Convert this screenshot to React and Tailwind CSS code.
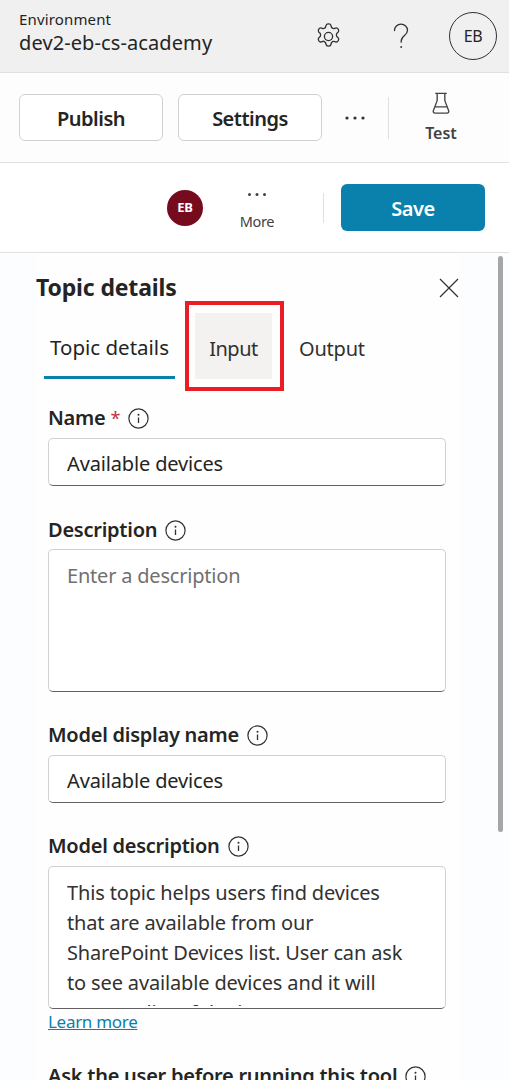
import React from "react";

function Info() {
  return (
    <svg width="21" height="21" viewBox="0 0 21 21" fill="none" className="shrink-0">
      <circle cx="10.5" cy="10.5" r="9.6" stroke="#323130" strokeWidth="1.2" />
      <circle cx="10.5" cy="6.8" r="1" fill="#323130" />
      <path d="M10.5 9.5v5.5" stroke="#323130" strokeWidth="1.3" />
    </svg>
  );
}

function Label({ children, star }) {
  return (
    <div className="flex items-center gap-[8px] h-[24px] text-[20px] font-semibold text-[#242424] tracking-[-0.25px] leading-[24px]">
      <span>
        {children}
        {star && <span className="text-[#c4314b] font-normal text-[18px] ml-[5px]">*</span>}
      </span>
      <Info />
    </div>
  );
}

function Input({ children }) {
  return (
    <div className="h-[48px] w-[398px] bg-white rounded-[5px] border border-[#d1d1d1] border-b-[#616161] pl-[18px] pt-[3px] flex items-center text-[20px] text-[#242424] tracking-[-0.15px]">
      {children}
    </div>
  );
}

export default function App() {
  return (
    <div className="relative w-[509px] h-[1080px] overflow-hidden bg-[#fcfdfe] font-['Noto_Sans',sans-serif] text-[#242424]">
      <header className="h-[73px] bg-[#f0f0f0] border-b border-[#e0e0e0] flex items-center pl-[19px] pr-[12px]">
        <div className="flex-1 flex flex-col pb-[8px]">
          <span className="text-[15px] leading-[20px] tracking-[0.15px] text-[#242424]">Environment</span>
          <span className="text-[20px] leading-[26px] mt-[1px] tracking-[0.1px] text-[#242424]">dev2-eb-cs-academy</span>
        </div>
        <svg width="29" height="29" viewBox="0 0 24 24" fill="none" stroke="#323130" strokeWidth="1.1" strokeLinejoin="round" className="mr-[50px]">
          <path d="M12.2 1.5h-.4c-.9 0-1.7.6-1.9 1.5l-.3 1.2c-.1.3-.3.5-.5.6l-.9.5c-.3.1-.6.2-.8.1l-1.2-.4c-.9-.3-1.8.1-2.2.9l-.2.3c-.4.8-.3 1.8.4 2.4l.9.8c.2.2.3.5.3.8v1c0 .3-.1.6-.3.8l-.9.8c-.7.6-.8 1.6-.4 2.4l.2.3c.4.8 1.3 1.2 2.2.9l1.2-.4c.3-.1.6 0 .8.1l.9.5c.2.1.4.3.5.6l.3 1.2c.2.9 1 1.5 1.9 1.5h.4c.9 0 1.7-.6 1.9-1.5l.3-1.2c.1-.3.3-.5.5-.6l.9-.5c.3-.1.6-.2.8-.1l1.2.4c.9.3 1.8-.1 2.2-.9l.2-.3c.4-.8.3-1.8-.4-2.4l-.9-.8c-.2-.2-.3-.5-.3-.8v-1c0-.3.1-.6.3-.8l.9-.8c.7-.6.8-1.6.4-2.4l-.2-.3c-.4-.8-1.3-1.2-2.2-.9l-1.2.4c-.3.1-.6 0-.8-.1l-.9-.5c-.2-.1-.4-.3-.5-.6L14.1 3c-.2-.9-1-1.5-1.9-1.5z" />
          <circle cx="12" cy="12" r="3.4" />
        </svg>
        <svg width="16" height="26" viewBox="0 0 16 26" fill="none" stroke="#323130" strokeWidth="1.3" className="mr-[40px]">
          <path d="M1.5 7.5C1.5 3.9 4.4 1.2 8 1.2s6.5 2.7 6.5 6c0 2.4-1.3 3.8-3 5.2-1.9 1.5-3.3 2.7-3.3 5.6v1.2" strokeLinecap="round" />
          <circle cx="8.2" cy="24" r="0.9" fill="#323130" stroke="none" />
        </svg>
        <div className="w-[48px] h-[48px] rounded-full border border-[#323130] flex items-center justify-center text-[16px] tracking-[-0.3px] text-[#242424]">EB</div>
      </header>

      <div className="h-[90px] bg-[#fdfdfe] border-b border-[#e0e0e0] flex items-center pl-[19px]">
        <button className="w-[144px] h-[47px] rounded-[6px] border border-[#d1d1d1] bg-white pt-[3px] text-[20px] font-semibold tracking-[-0.5px] text-[#242424]">Publish</button>
        <button className="ml-[15px] w-[144px] h-[47px] rounded-[6px] border border-[#d1d1d1] bg-white pt-[3px] text-[20px] font-semibold tracking-[-0.5px] text-[#242424]">Settings</button>
        <svg width="20" height="4" viewBox="0 0 20 4" fill="#323130" className="ml-[23px]">
          <circle cx="2" cy="2" r="1.6" /><circle cx="10" cy="2" r="1.6" /><circle cx="18" cy="2" r="1.6" />
        </svg>
        <div className="ml-[23px] w-px h-[42px] bg-[#e0e0e0]" />
        <div className="ml-[19px] w-[66px] flex flex-col items-center">
          <svg width="20" height="23" viewBox="0 0 20 24" fill="none" stroke="#424242" strokeWidth="1.4" strokeLinejoin="round" className="mt-[1px]">
            <path d="M4 1.5h12M6 1.5v7.5L2 19.5c-.5 1.5.4 2.5 1.7 2.5h12.6c1.3 0 2.2-1 1.7-2.5L14 9V1.5M4 15.5h12" />
          </svg>
          <span className="text-[16px] font-semibold tracking-[0px] text-[#424242] leading-[22px] mt-[7px]">Test</span>
        </div>
      </div>

      <div className="h-[90px] bg-white border-b border-[#e0e0e0] flex items-center justify-end pr-[24px]">
        <div className="w-[36px] h-[36px] rounded-full bg-[#750b1c] text-white text-[13px] font-bold flex items-center justify-center tracking-[-0.3px]">EB</div>
        <div className="ml-[20px] w-[68px] flex flex-col items-center pt-[8px]">
          <svg width="20" height="5" viewBox="0 0 20 5" fill="#424242">
            <circle cx="2.5" cy="2.5" r="1.5" /><circle cx="10" cy="2.5" r="1.5" /><circle cx="17.5" cy="2.5" r="1.5" />
          </svg>
          <span className="text-[14.5px] tracking-[-0.35px] leading-[20px] text-[#424242] mt-[14px]">More</span>
        </div>
        <div className="ml-[32px] w-px h-[30px] bg-[#e0e0e0]" />
        <button className="ml-[17px] w-[144px] h-[47px] rounded-[6px] bg-[#0a80ad] text-white pt-[3px] text-[20px] font-semibold tracking-[-0.5px]">Save</button>
      </div>

      <main className="ml-[36px] w-[422px] h-[827px] bg-[#fefefe]">
        <div className="w-[424px] flex items-center justify-between pt-[19px]">
          <h2 className="text-[23px] font-bold tracking-[-0.15px] leading-[30px] text-[#242424]">Topic details</h2>
          <svg width="20" height="20" viewBox="0 0 20 20" stroke="#323130" strokeWidth="1.2" className="mr-[1px] mt-[2px]">
            <path d="M1 1l18 18M19 1L1 19" />
          </svg>
        </div>

        <div className="flex items-start ml-[8px] mt-[11px] h-[70px]">
          <div className="w-[131px] h-[66px] pt-[5px] border-b-[3px] border-[#0a80ad] flex items-center justify-center text-[20.5px] text-[#242424]">Topic details</div>
          <div className="ml-[20px] w-[77px] h-[66px] pt-[5px] bg-[#f3f2f1] flex items-center justify-center text-[20px] tracking-[-0.5px] text-[#323130]">Input</div>
          <div className="ml-[27px] h-[66px] pt-[5px] flex items-center text-[20px] tracking-[-0.2px] text-[#323130]">Output</div>
        </div>

        <div className="ml-[12px] mt-[23px] flex flex-col">
          <Label star>Name</Label>
          <div className="mt-[8px]"><Input>Available devices</Input></div>

          <div className="mt-[32px]"><Label>Description</Label></div>
          <div className="mt-[7px] h-[143px] w-[398px] bg-white rounded-[5px] border border-[#d1d1d1] border-b-[#616161] pl-[18px] pt-[11px] text-[20px] leading-[30px] text-[#707070] tracking-[-0.2px]">Enter a description</div>

          <div className="mt-[31px]"><Label>Model display name</Label></div>
          <div className="mt-[8px]"><Input>Available devices</Input></div>

          <div className="mt-[31px]"><Label>Model description</Label></div>
          <div className="mt-[8px] h-[143px] w-[398px] overflow-hidden bg-white rounded-[5px] border border-[#d1d1d1] border-b-[#616161] pl-[18px] pr-[14px] pt-[11px] pb-[2px]">
            <div className="h-[128px] overflow-hidden text-[20px] leading-[30px] text-[#323130] tracking-[-0.15px]">
              This topic helps users find devices<br />that are available from our<br />SharePoint Devices list. User can ask<br />to see available devices and it will<br />return a list of the items.
            </div>
          </div>
          <a className="mt-[1px] text-[17px] leading-[24px] tracking-[-0.3px] text-[#0a80ad] underline w-fit">Learn more</a>

          <div className="mt-[30px]"><Label>Ask the user before running this tool</Label></div>
        </div>
      </main>

      <div className="absolute left-[185px] top-[301px] w-[99px] h-[90px] border-[4px] border-[#ec1c24]" />
      <div className="absolute left-[498px] top-[256px] w-[5px] h-[576px] rounded-[3px] bg-[#a6a6a6]" />
    </div>
  );
}
